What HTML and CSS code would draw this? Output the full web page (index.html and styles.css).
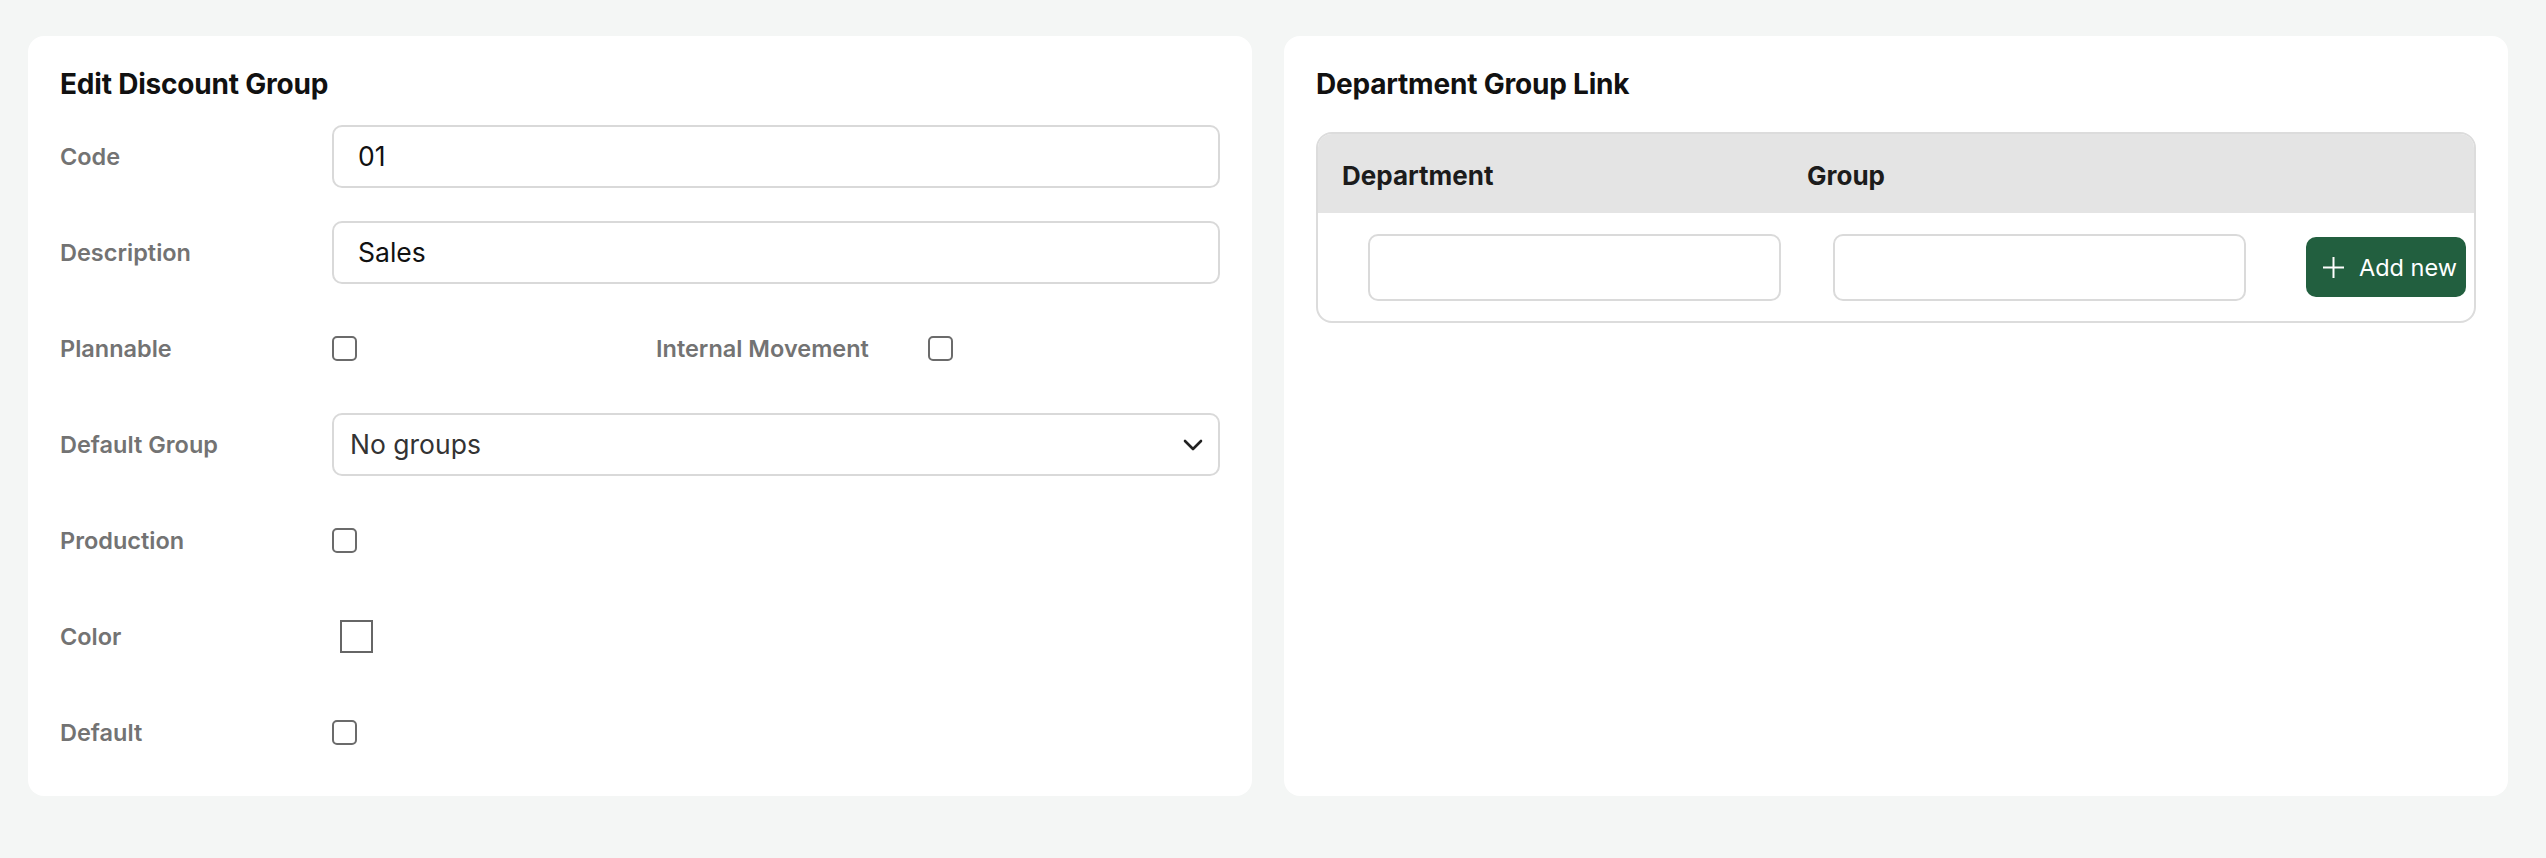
FILE: index.html
```html
<!DOCTYPE html>
<html lang="en">
<head>
    <meta charset="UTF-8">
    <meta name="viewport" content="width=device-width, initial-scale=1.0">
    <title>Edit Discount Group</title>
    <link rel="stylesheet" href="styles.css">
</head>
<body>
    <div class="page">
        <section class="card">
            <h2>Edit Discount Group</h2>

            <div class="form-row">
                <label>Code</label>
                <input type="text" class="text-input" value="01">
            </div>
            <div class="form-row">
                <label>Description</label>
                <input type="text" class="text-input" value="Sales">
            </div>
            <div class="form-row split">
                <div class="half">
                    <label>Plannable</label>
                    <input type="checkbox" class="check">
                </div>
                <div class="half">
                    <label>Internal Movement</label>
                    <input type="checkbox" class="check">
                </div>
            </div>
            <div class="form-row">
                <label>Default Group</label>
                <div class="select-wrap">
                    <select class="select-input">
                        <option>No groups</option>
                    </select>
                    <svg class="chevron" width="20" height="12" viewBox="0 0 20 12">
                        <path d="M2 2 L10 10 L18 2" fill="none" stroke="#222" stroke-width="2.6" stroke-linecap="round" stroke-linejoin="round"/>
                    </svg>
                </div>
            </div>
            <div class="form-row">
                <label>Production</label>
                <input type="checkbox" class="check">
            </div>
            <div class="form-row">
                <label>Color</label>
                <input type="color" class="color-input" value="#ffffff">
            </div>
            <div class="form-row">
                <label>Default</label>
                <input type="checkbox" class="check">
            </div>
        </section>

        <section class="card">
            <h2>Department Group Link</h2>

            <div class="link-table">
                <div class="link-head">
                    <div class="head-cell">Department</div>
                    <div class="head-cell">Group</div>
                    <div class="head-cell"></div>
                </div>
                <div class="link-row">
                    <div class="body-cell"><input type="text" class="cell-input"></div>
                    <div class="body-cell"><input type="text" class="cell-input"></div>
                    <div class="body-cell action">
                        <button class="add-btn">
                            <svg width="25" height="25" viewBox="0 0 25 25">
                                <path d="M12.5 2 V23 M2 12.5 H23" stroke="#fff" stroke-width="2" fill="none"/>
                            </svg>
                            Add new
                        </button>
                    </div>
                </div>
            </div>
        </section>
    </div>
</body>
</html>
```

FILE: styles.css
```css
body {
    font-family: 'Inter', 'Noto Sans', sans-serif;
    background-color: #f4f6f5;
    margin: 0;
    color: #111;
}

.page {
    display: flex;
    gap: 32px;
    padding: 36px 38px 0 28px;
}

.card {
    flex: 1;
    background-color: #fff;
    border-radius: 16px;
    padding: 31px 32px 16px 32px;
}

h2 {
    margin: 0 0 7px 0;
    font-size: 28px;
    line-height: 34px;
    font-weight: 700;
    letter-spacing: -0.2px;
    color: #111;
}

.form-row {
    display: grid;
    grid-template-columns: 272px 1fr;
    align-items: center;
    height: 96px;
}

.form-row.split {
    grid-template-columns: 1fr 1fr;
    gap: 32px;
}

.half {
    display: grid;
    grid-template-columns: 272px 1fr;
    align-items: center;
}

.form-row label,
.half label {
    font-size: 23.5px;
    font-weight: 600;
    color: #737373;
}

.text-input {
    box-sizing: border-box;
    width: 100%;
    height: 63px;
    padding: 0 24px;
    border: 2px solid #d9d9d9;
    border-radius: 10px;
    font-family: inherit;
    font-size: 26.5px;
    color: #111;
    outline: none;
}

.select-wrap {
    position: relative;
}

.select-input {
    box-sizing: border-box;
    width: 100%;
    height: 63px;
    padding: 0 16px;
    border: 2px solid #d9d9d9;
    border-radius: 10px;
    background-color: #fff;
    font-family: inherit;
    font-size: 26.5px;
    color: #333;
    appearance: none;
    outline: none;
}

.chevron {
    position: absolute;
    right: 17px;
    top: 26px;
    pointer-events: none;
}

.check {
    appearance: none;
    margin: 0;
    width: 25px;
    height: 25px;
    border: 2px solid #6b6b6b;
    border-radius: 5px;
    background-color: #fff;
}

.color-input {
    appearance: none;
    margin: 0 0 0 8px;
    width: 33px;
    height: 33px;
    padding: 0;
    border: 2px solid #666;
    background-color: #fff;
}

.color-input::-webkit-color-swatch-wrapper {
    padding: 0;
}

.color-input::-webkit-color-swatch {
    border: none;
}

.link-table {
    margin-top: 31px;
    border: 2px solid #dcdcdc;
    border-radius: 16px;
    overflow: hidden;
}

.link-head,
.link-row {
    display: grid;
    grid-template-columns: 465px 465px 1fr;
    align-items: center;
}

.link-head {
    height: 79px;
    background-color: #e4e4e4;
}

.head-cell {
    padding: 3px 0 0 24px;
    font-size: 26px;
    font-weight: 700;
    color: #1c1c1c;
}

.link-row {
    height: 108px;
}

.cell-input {
    box-sizing: border-box;
    margin-left: 50px;
    width: calc(100% - 52px);
    height: 67px;
    padding: 0 20px;
    border: 2px solid #dadada;
    border-radius: 10px;
    font-family: inherit;
    font-size: 26px;
    outline: none;
}

.body-cell.action {
    display: flex;
    justify-content: flex-end;
    padding-right: 8px;
}

.add-btn {
    display: flex;
    align-items: center;
    gap: 13px;
    box-sizing: border-box;
    width: 160px;
    height: 60px;
    padding: 0 0 0 15px;
    border: none;
    border-radius: 10px;
    background-color: #225f3f;
    color: #fff;
    font-family: inherit;
    font-size: 23.5px;
    cursor: pointer;
}
```
